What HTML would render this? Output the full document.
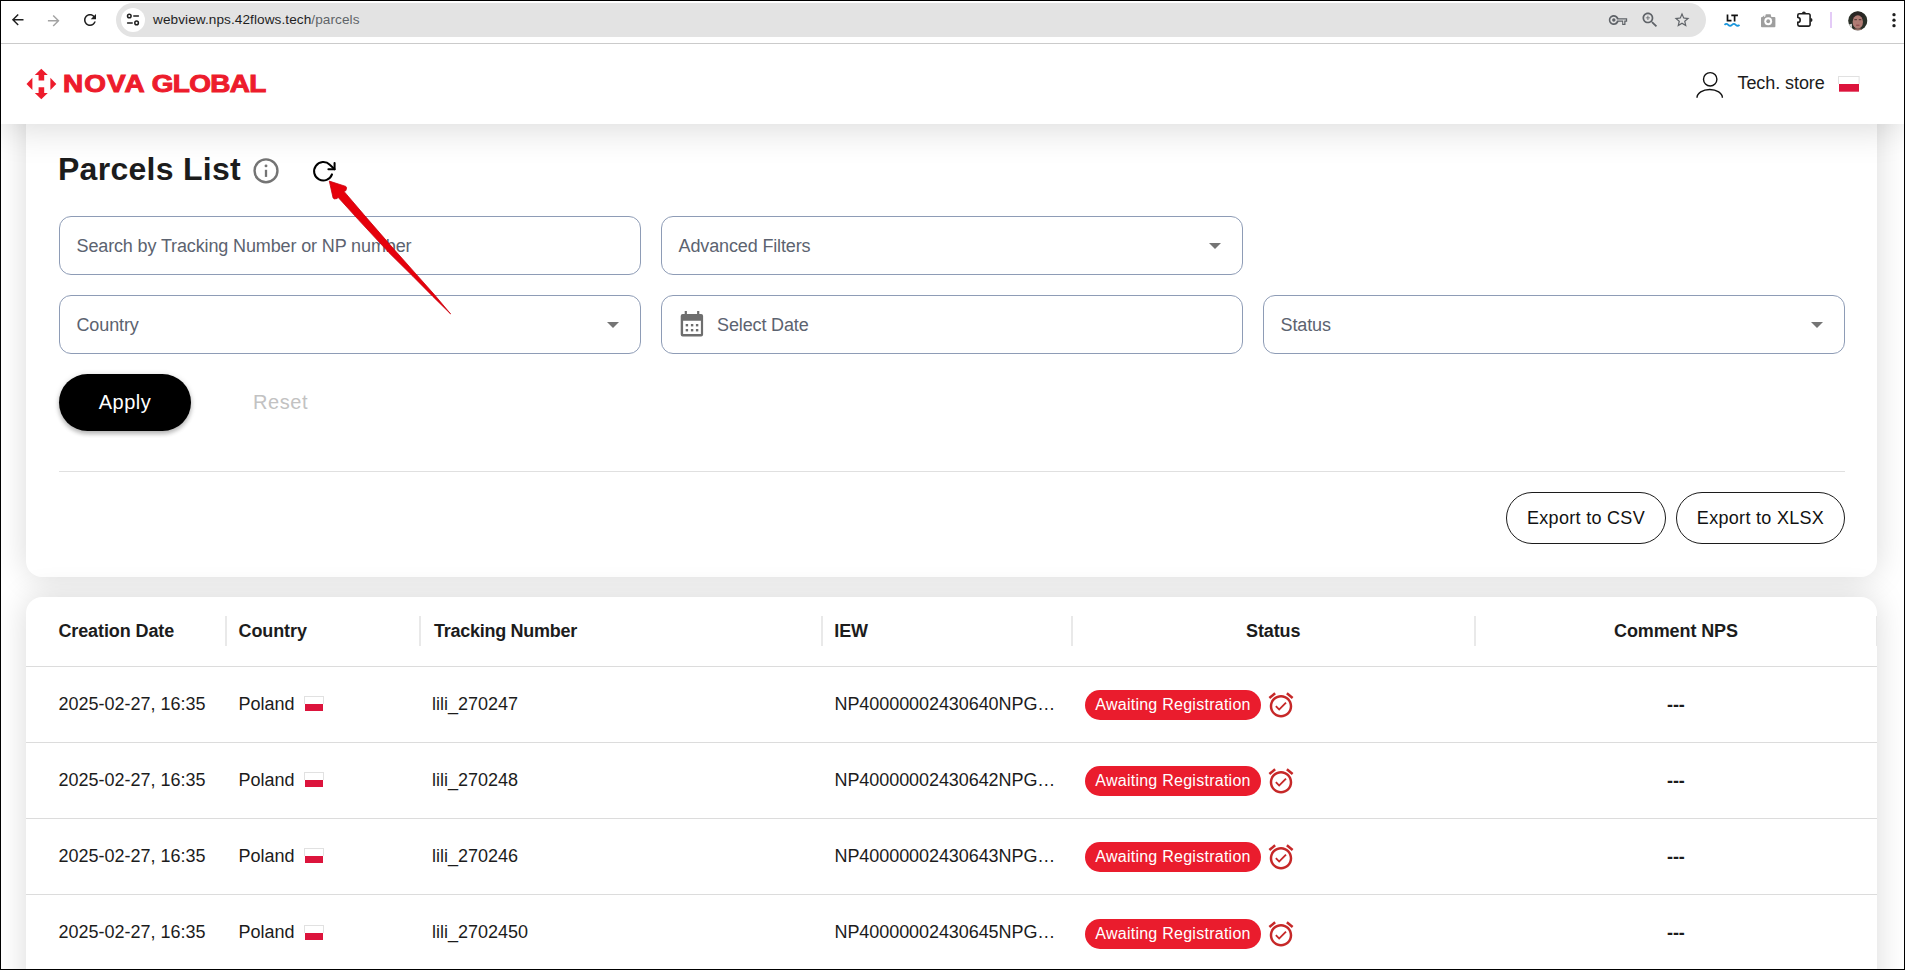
<!DOCTYPE html>
<html lang="en">
<head>
<meta charset="utf-8">
<title>Parcels</title>
<style>
*{box-sizing:border-box;margin:0;padding:0}
html,body{width:1905px;height:970px;overflow:hidden;background:#fff}
body{font-family:"Liberation Sans",Arial,sans-serif;color:#1c1c1c;position:relative}
.abs{position:absolute}
svg{position:absolute;overflow:visible}
#frame{position:absolute;left:0;top:0;width:1905px;height:970px;border:1px solid #000;z-index:100;pointer-events:none}
/* browser chrome */
#chrome{position:absolute;left:1px;top:1px;width:1903px;height:43px;background:#fff;border-bottom:1px solid #cbcbcb;z-index:50}
#omni{position:absolute;left:115px;top:2px;width:1590px;height:34px;border-radius:17px;background:#e3e3e3}
#omni .site{position:absolute;left:5px;top:5px;width:24px;height:24px;border-radius:50%;background:#fff}
#url{position:absolute;left:153px;top:12px;font-size:13.6px;color:#1f1f1f;white-space:nowrap;letter-spacing:0.08px;z-index:60;line-height:16px}
#url span{color:#5f6368}
/* app header */
#hdr{position:absolute;left:1px;top:44px;width:1903px;height:80px;background:#fff;z-index:40;box-shadow:0 0 40px rgba(0,0,0,.18)}
#brand{position:absolute;left:62.6px;top:69.2px;font-size:24.4px;line-height:30px;font-weight:bold;color:#ed1c2c;z-index:45;white-space:nowrap;-webkit-text-stroke:1px #ed1c2c;transform-origin:0 0;transform:scaleX(1.145)}
#user{position:absolute;left:1737.5px;top:72px;font-size:18px;line-height:22px;color:#1c1c1c;z-index:45;white-space:nowrap;letter-spacing:-0.08px}
/* page */
#page{position:absolute;left:1px;top:124px;width:1903px;height:845px;background:#fff;overflow:hidden}
.card{position:absolute;left:25px;width:1851px;background:#fff;border-radius:16px;box-shadow:0 0 32px rgba(0,0,0,.15)}
#card1{top:-60px;height:513px}
#card2{top:473px;height:460px}
h1{position:absolute;left:58px;top:150px;font-size:32px;line-height:38px;font-weight:bold;color:#1c1c1c;white-space:nowrap;z-index:5;letter-spacing:0.27px}
.fld{position:absolute;height:59px;width:582px;border:1px solid #8e9cb6;border-radius:12px;background:#fff;z-index:5}
.fld .lbl{position:absolute;left:16.5px;top:18px;font-size:18px;line-height:22px;color:#5c6370;white-space:nowrap;letter-spacing:-0.13px}
.car{position:absolute;width:0;height:0;border-left:6px solid transparent;border-right:6px solid transparent;border-top:6px solid #757575;z-index:6}
#apply{position:absolute;left:59px;top:374px;width:132px;height:57px;border-radius:29px;background:#000;color:#fff;font-size:20px;text-align:center;line-height:56px;z-index:5;box-shadow:0 3px 4px rgba(0,0,0,.22),0 1px 6px rgba(0,0,0,.14);letter-spacing:0.5px}
#reset{position:absolute;left:253px;top:390px;font-size:20px;line-height:24px;color:#c2c2c2;z-index:5;letter-spacing:0.6px}
#hr1{position:absolute;left:59px;top:471px;width:1786px;height:1px;background:#e0e0e0;z-index:5}
.exp{position:absolute;top:492px;height:52px;border:1px solid #1c1c1c;border-radius:26px;font-size:18px;color:#111;text-align:center;line-height:50px;z-index:5;background:#fff;letter-spacing:0.3px}
/* table */
.th{position:absolute;top:620px;font-size:18px;line-height:22px;font-weight:bold;color:#1c1c1c;white-space:nowrap;z-index:5;letter-spacing:-0.1px}
.sep{position:absolute;top:616px;width:2px;height:30px;background:#e9e9e9;z-index:5}
.rl{position:absolute;left:26px;width:1851px;height:1px;background:#dcdcdc;z-index:5}
.td{position:absolute;font-size:18px;line-height:22px;color:#1c1c1c;white-space:nowrap;z-index:5}
.badge{position:absolute;left:1085px;width:176px;height:30px;border-radius:15px;background:#ea1c2d;color:#fff;font-size:16px;line-height:29px;text-align:center;z-index:5;white-space:nowrap;letter-spacing:0.26px}
.flag{position:absolute;z-index:5;width:20px;height:15px;background:linear-gradient(#dc143c,#dc143c) 1px 7.9px/18px 7.1px no-repeat,linear-gradient(#fff,#fff) 1px 1px/18px 7px no-repeat,linear-gradient(#e1e1e1,#e1e1e1) 0 0/20px 8.2px no-repeat}
.flagh{position:absolute;z-index:45;left:1838.1px;top:76px;width:21.6px;height:16px;background:linear-gradient(#dc143c,#dc143c) .9px 8.2px/20px 7.7px no-repeat,linear-gradient(#fff,#fff) 1px 1px/19.6px 7.3px no-repeat,linear-gradient(#e1e1e1,#e1e1e1) 0 0/21.6px 8.4px no-repeat}
.alarm{z-index:5;width:30px;height:30px;left:1266.3px}
</style>
</head>
<body>
<div id="page">
  <div class="card" id="card1"></div>
  <div class="card" id="card2"></div>
</div>
<div id="chrome">
  <div id="omni"><div class="site"></div></div>
</div>
<div id="url">webview.nps.42flows.tech<span>/parcels</span></div>

<svg style="left:8.9px;top:10.9px;width:17.4px;height:17.4px;z-index:60" viewBox="0 0 24 24"><path fill="#1f1f1f" d="M20 11H7.83l5.59-5.59L12 4l-8 8 8 8 1.41-1.41L7.83 13H20v-2z"/></svg>
<svg style="left:45.1px;top:11.5px;width:17.4px;height:17.4px;z-index:60" viewBox="0 0 24 24"><path fill="#a3a3a3" d="M4 11h12.17l-5.59-5.59L12 4l8 8-8 8-1.41-1.41L16.170 13H4v-2z"/></svg>
<svg style="left:81px;top:11px;width:18px;height:18px;z-index:60" viewBox="0 0 24 24"><path fill="#1f1f1f" d="M17.65 6.35C16.2 4.9 14.21 4 12 4c-4.42 0-7.990 3.580-7.990 8s3.570 8 7.990 8c3.730 0 6.840-2.550 7.730-6h-2.080c-.82 2.330-3.040 4-5.650 4-3.310 0-6-2.690-6-6s2.690-6 6-6c1.660 0 3.140.69 4.220 1.780L13 11h7V4l-2.350 2.350z"/></svg>
<svg style="left:121px;top:8.4px;width:23px;height:23px;z-index:60" viewBox="0 0 23 23"><g fill="none" stroke="#1f1f1f" stroke-width="1.5" stroke-linecap="round"><circle cx="8.300" cy="8" r="1.800"/><path d="M12.800 8h4.600M6.600 14.900h4.600"/><circle cx="15.600" cy="14.900" r="1.800"/></g></svg>
<svg style="left:1608px;top:10px;width:20px;height:20px;z-index:60" viewBox="0 0 24 24"><path fill="#5f6368" fill-rule="evenodd" d="M12.650 10C11.830 7.670 9.610 6 7 6c-3.310 0-6 2.690-6 6s2.690 6 6 6c2.610 0 4.830-1.670 5.650-4H17v4h4v-4h2v-4H12.650zM7 14c-1.100 0-2-.9-2-2s.9-2 2-2 2 .9 2 2-.9 2-2 2zM11.200 12.600h-0.500a4 4 0 1 1 0-1.200h10.800v1.200h-2v4h-1.300v-4z" transform="translate(0 0)"/></svg>
<svg style="left:1640px;top:10px;width:20px;height:20px;z-index:60" viewBox="0 0 24 24"><path fill="#5f6368" d="M15.500 14h-.79l-.28-.27C15.410 12.590 16 11.110 16 9.500 16 5.910 13.090 3 9.500 3S3 5.910 3 9.500 5.910 16 9.500 16c1.610 0 3.090-.59 4.230-1.570l.27.28v.79l5 4.990L20.490 19l-4.990-5zm-6 0C7.010 14 5 11.990 5 9.500S7.010 5 9.500 5 14 7.010 14 9.500 11.990 14 9.500 14zm.5-7H9v2H7v1h2v2h1v-2h2V9h-2z"/></svg>
<svg style="left:1673.300px;top:11px;width:18px;height:18px;z-index:60" viewBox="0 0 24 24"><path fill="#5f6368" d="M22 9.240l-7.190-.62L12 2 9.190 8.630 2 9.240l5.460 4.730L5.820 21 12 17.270 18.180 21l-1.630-7.030L22 9.240zM12 15.400l-3.760 2.270 1-4.280-3.320-2.880 4.380-.38L12 6.100l1.710 4.040 4.380.38-3.320 2.880 1 4.280L12 15.400z"/></svg>
<svg style="left:1723px;top:12px;width:18px;height:16px;z-index:60" viewBox="0 0 18 16"><g fill="none" stroke="#111" stroke-width="1.700"><path d="M4.500 2.500v6.200h4"/><path d="M8.300 3.300h6.600M11.600 3.300v6.200"/></g><path d="M1.500 12.800q1.900-1.800 3.750 0t3.750 0 3.750 0 3.750 0" fill="none" stroke="#1a96dc" stroke-width="1.800"/></svg>
<svg style="left:1760.700px;top:13.600px;width:14.400px;height:13.200px;z-index:60" preserveAspectRatio="none" viewBox="0 0 15 13.500"><path fill="#9e9e9e" d="M5 0.300h5l0.800 2.700h3.200a1 1 0 0 1 1 1v8.500a1 1 0 0 1-1 1H1a1 1 0 0 1-1-1V4a1 1 0 0 1 1-1h0.400l2-1.600v1.600h0.800z"/><circle cx="7.500" cy="7.400" r="4.050" fill="#fff"/><circle cx="7.500" cy="7.400" r="1.950" fill="#9e9e9e"/></svg>
<svg style="left:1790px;top:6px;width:30px;height:26px;z-index:60" viewBox="1790 6 30 26"><path fill="none" stroke="#1f1f1f" stroke-width="1.600" stroke-linecap="round" d="M1797.800 17.500V15.300a1.500 1.500 0 0 1 1.500-1.500H1808.600a1.500 1.500 0 0 1 1.500 1.500V24.600a1.500 1.500 0 0 1-1.500 1.500H1799.300a1.500 1.500 0 0 1-1.500-1.500V22.300a2.400 2.400 0 0 0 0-4.800"/><path fill="#1f1f1f" d="M1801.900 13.400a2 2 0 0 1 4 0zM1810.500 17.900a2 2 0 0 1 0 4z"/></svg>
<div class="abs" style="left:1830px;top:12px;width:2px;height:16px;background:#e4cbf7;z-index:60"></div>
<svg style="left:1848px;top:11px;width:19.600px;height:19.600px;z-index:60" viewBox="0 0 20 20"><defs><clipPath id="av"><circle cx="10" cy="10" r="9.800"/></clipPath></defs><g clip-path="url(#av)"><rect width="20" height="20" fill="#2b3028"/><path d="M0 14l4-1v7H0z" fill="#d9d9d9"/><ellipse cx="10" cy="5.500" rx="6.400" ry="5" fill="#2a2624"/><ellipse cx="10" cy="11.200" rx="5.300" ry="6.800" fill="#b07c74"/><path d="M3 20q7-5 14 0z" fill="#8d6a62"/><rect x="6.500" y="8.200" width="2.600" height="1.200" fill="#5a3a36"/><rect x="11" y="8.200" width="2.600" height="1.200" fill="#5a3a36"/><rect x="8.300" y="14" width="3.400" height="1" fill="#8a3f45"/></g></svg>
<svg style="left:1891px;top:12px;width:6px;height:16px;z-index:60" viewBox="0 0 6 16"><g fill="#1f1f1f"><circle cx="3" cy="2.700" r="1.650"/><circle cx="3" cy="8.200" r="1.650"/><circle cx="3" cy="13.700" r="1.650"/></g></svg>

<div id="hdr"></div>
<svg style="left:26px;top:68px;width:31px;height:32px;z-index:45" viewBox="26 68 31 32"><g fill="#ed1c2c"><path d="M41.300 68.700L47.800 74.900H44.200V80.500H38.600V74.900H34.800z"/><path d="M41.300 99.200L47.800 93H44.200V87.300H38.600V93H34.800z"/><path d="M26.500 83.900L32.400 77.800V90z"/><path d="M56.300 83.900L50.400 77.800V90z"/></g></svg>
<div id="brand"><span style="letter-spacing:.9px">NOVA</span><span style="letter-spacing:-.6px;margin-left:-.9px"> GLOBAL</span></div>
<svg style="left:1695px;top:71px;width:30px;height:29px;z-index:45" viewBox="1695 71 30 29"><g fill="none" stroke="#111" stroke-width="1.400"><circle cx="1710.200" cy="79.350" r="6.700"/><path d="M1697 97.800a12.700 8.300 0 0 1 25.400 0"/></g></svg>
<div id="user">Tech. store</div>
<div class="flagh"></div>

<h1>Parcels List</h1>
<svg style="left:253px;top:158px;width:26px;height:26px;z-index:6" viewBox="253 158 26 26"><circle cx="266" cy="170.800" r="11.450" fill="none" stroke="#747474" stroke-width="2.400"/><rect x="264.850" y="169.800" width="2.300" height="7.100" fill="#747474"/><circle cx="266" cy="165.900" r="1.450" fill="#747474"/></svg>
<svg style="left:310.900px;top:158.900px;width:24.600px;height:24.600px;z-index:6" viewBox="0 0 24 24" fill="none" stroke="#000" stroke-width="2" stroke-linecap="round" stroke-linejoin="round"><polyline points="23 4 23 10 17 10"/><path d="M20.490 15a9 9 0 1 1-2.120-9.360L23 10"/></svg>

<div class="fld" style="left:59px;top:216px"><div class="lbl">Search by Tracking Number or NP number</div></div>
<div class="fld" style="left:661px;top:216px"><div class="lbl">Advanced Filters</div></div>
<div class="fld" style="left:59px;top:295px"><div class="lbl">Country</div></div>
<div class="fld" style="left:661px;top:295px"><div class="lbl" style="left:55px">Select Date</div></div>
<div class="fld" style="left:1263px;top:295px"><div class="lbl">Status</div></div>
<div class="car" style="left:1209px;top:243px"></div>
<div class="car" style="left:607px;top:322px"></div>
<div class="car" style="left:1811px;top:322px"></div>
<svg style="left:680px;top:310px;width:24px;height:28px;z-index:6" viewBox="680 310 24 28"><g fill="#6e6e6e"><rect x="684.700" y="311" width="2.200" height="4"/><rect x="697.100" y="311" width="2.200" height="4"/><path fill-rule="evenodd" d="M682.700 313.900h18.400a2 2 0 0 1 2 2v18.700a2 2 0 0 1-2 2h-18.400a2 2 0 0 1-2-2v-18.700a2 2 0 0 1 2-2zM683.100 320.800v13.200h17.800v-13.200z"/><rect x="685.700" y="324" width="2.400" height="2.400"/><rect x="690.900" y="324" width="2.400" height="2.400"/><rect x="695.900" y="324" width="2.400" height="2.400"/><rect x="685.700" y="329" width="2.400" height="2.400"/><rect x="690.900" y="329" width="2.400" height="2.400"/><rect x="695.900" y="329" width="2.400" height="2.400"/></g></svg>

<div id="apply">Apply</div>
<div id="reset">Reset</div>
<div id="hr1"></div>
<div class="exp" style="left:1506px;width:160px">Export to CSV</div>
<div class="exp" style="left:1676px;width:169px">Export to XLSX</div>

<div class="th" style="left:58.4px">Creation Date</div>
<div class="th" style="left:238.5px">Country</div>
<div class="th" style="left:434px;letter-spacing:-0.27px">Tracking Number</div>
<div class="th" style="left:834.3px">IEW</div>
<div class="th" style="left:1246px">Status</div>
<div class="th" style="left:1614px">Comment NPS</div>
<div class="sep" style="left:225px"></div>
<div class="sep" style="left:419px"></div>
<div class="sep" style="left:821px"></div>
<div class="sep" style="left:1071px"></div>
<div class="sep" style="left:1474px"></div>
<div class="sep" style="left:1876px;width:1px"></div>
<div class="rl" style="top:666px"></div>
<div class="td" style="left:58.5px;top:693px">2025-02-27, 16:35</div>
<div class="td" style="left:238.5px;top:693px">Poland</div>
<div class="flag" style="left:304px;top:696px"></div>
<div class="td" style="left:432px;top:693px">lili_270247</div>
<div class="td" style="letter-spacing:-0.07px;left:834.5px;top:693px">NP40000002430640NPG…</div>
<div class="badge" style="top:690px">Awaiting Registration</div>
<svg class="alarm" style="top:689.8px" viewBox="0 0 24 24"><path fill="#c62828" d="M10.54 14.53 8.41 12.4l-1.06 1.06 3.18 3.18 6-6-1.06-1.06zm6.797-12.72 4.607 3.845-1.28 1.535-4.61-3.843zm-10.674 0 1.282 1.536L3.337 7.19l-1.28-1.536zM12 4c-4.97 0-9 4.03-9 9s4.03 9 9 9 9-4.03 9-9-4.03-9-9-9m0 16c-3.86 0-7-3.14-7-7s3.14-7 7-7 7 3.14 7 7-3.14 7-7 7"/></svg>
<div class="td" style="left:1667px;top:694px;font-weight:bold;letter-spacing:-0.1px">---</div>
<div class="rl" style="top:742px"></div>
<div class="td" style="left:58.5px;top:769px">2025-02-27, 16:35</div>
<div class="td" style="left:238.5px;top:769px">Poland</div>
<div class="flag" style="left:304px;top:772px"></div>
<div class="td" style="left:432px;top:769px">lili_270248</div>
<div class="td" style="letter-spacing:-0.07px;left:834.5px;top:769px">NP40000002430642NPG…</div>
<div class="badge" style="top:766px">Awaiting Registration</div>
<svg class="alarm" style="top:765.8px" viewBox="0 0 24 24"><path fill="#c62828" d="M10.54 14.53 8.41 12.4l-1.06 1.06 3.18 3.18 6-6-1.06-1.06zm6.797-12.72 4.607 3.845-1.28 1.535-4.61-3.843zm-10.674 0 1.282 1.536L3.337 7.19l-1.28-1.536zM12 4c-4.97 0-9 4.03-9 9s4.03 9 9 9 9-4.03 9-9-4.03-9-9-9m0 16c-3.86 0-7-3.14-7-7s3.14-7 7-7 7 3.14 7 7-3.14 7-7 7"/></svg>
<div class="td" style="left:1667px;top:770px;font-weight:bold;letter-spacing:-0.1px">---</div>
<div class="rl" style="top:818px"></div>
<div class="td" style="left:58.5px;top:845px">2025-02-27, 16:35</div>
<div class="td" style="left:238.5px;top:845px">Poland</div>
<div class="flag" style="left:304px;top:848px"></div>
<div class="td" style="left:432px;top:845px">lili_270246</div>
<div class="td" style="letter-spacing:-0.07px;left:834.5px;top:845px">NP40000002430643NPG…</div>
<div class="badge" style="top:842px">Awaiting Registration</div>
<svg class="alarm" style="top:841.8px" viewBox="0 0 24 24"><path fill="#c62828" d="M10.54 14.53 8.41 12.4l-1.06 1.06 3.18 3.18 6-6-1.06-1.06zm6.797-12.72 4.607 3.845-1.28 1.535-4.61-3.843zm-10.674 0 1.282 1.536L3.337 7.19l-1.28-1.536zM12 4c-4.97 0-9 4.03-9 9s4.03 9 9 9 9-4.03 9-9-4.03-9-9-9m0 16c-3.86 0-7-3.14-7-7s3.14-7 7-7 7 3.14 7 7-3.14 7-7 7"/></svg>
<div class="td" style="left:1667px;top:846px;font-weight:bold;letter-spacing:-0.1px">---</div>
<div class="rl" style="top:894px"></div>
<div class="td" style="left:58.5px;top:921px">2025-02-27, 16:35</div>
<div class="td" style="left:238.5px;top:921px">Poland</div>
<div class="flag" style="left:304px;top:925px"></div>
<div class="td" style="left:432px;top:921px">lili_2702450</div>
<div class="td" style="letter-spacing:-0.07px;left:834.5px;top:921px">NP40000002430645NPG…</div>
<div class="badge" style="top:919px">Awaiting Registration</div>
<svg class="alarm" style="top:918.8px" viewBox="0 0 24 24"><path fill="#c62828" d="M10.54 14.53 8.41 12.4l-1.06 1.06 3.18 3.18 6-6-1.06-1.06zm6.797-12.72 4.607 3.845-1.28 1.535-4.61-3.843zm-10.674 0 1.282 1.536L3.337 7.19l-1.28-1.536zM12 4c-4.97 0-9 4.03-9 9s4.03 9 9 9 9-4.03 9-9-4.03-9-9-9m0 16c-3.86 0-7-3.14-7-7s3.14-7 7-7 7 3.14 7 7-3.14 7-7 7"/></svg>
<div class="td" style="left:1667px;top:922px;font-weight:bold;letter-spacing:-0.1px">---</div>
<svg style="left:0;top:0;width:1905px;height:970px;z-index:20;pointer-events:none" viewBox="0 0 1905 970"><defs><linearGradient id="ag" x1="0" y1="0" x2="1" y2="1"><stop offset="0" stop-color="#f0202a"/><stop offset="1" stop-color="#c4000c"/></linearGradient></defs><path d="M329.3 181.1L345.8 186.4L346.6 187.8L345.9 190.6L344.0 191.4L363.8 214.6L393.3 248.5L415.9 273.9L434.5 294.8L450.6 313.9L432.8 296.4L413.1 276.5L388.9 252.6L358.3 219.6L337.8 197.0L337.2 198.5L334.4 198.9L333.1 198.0z" fill="#e6000b" stroke="#c8000d" stroke-width="0.8" stroke-linejoin="round"/></svg>
<div id="frame"></div>
</body>
</html>
